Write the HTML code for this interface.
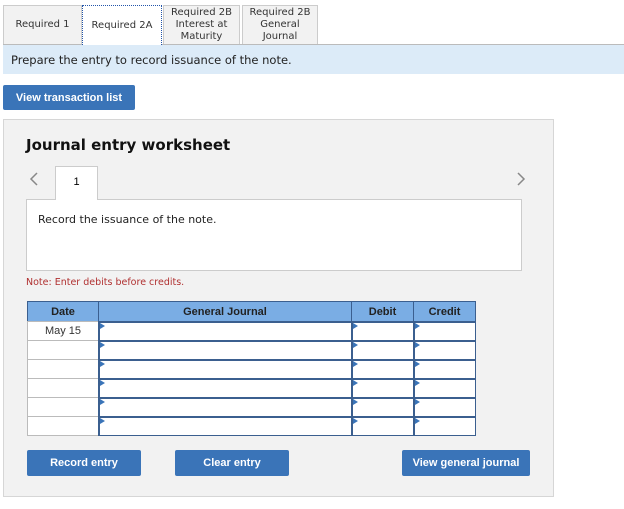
<!DOCTYPE html>
<html><head><style>
body{margin:0;width:624px;height:509px;background:#fff;font-family:Verdana,"DejaVu Sans",sans-serif;position:relative;overflow:hidden}
.a{position:absolute;box-sizing:border-box}
.tab{background:#f2f2f2;border:1px solid #ccc;border-bottom:none;font-size:10px;color:#333;text-align:center;display:flex;align-items:center;justify-content:center;line-height:12px}
.btn{background:#3a74b8;color:#fff;font-family:"Liberation Sans",Arial,sans-serif;font-weight:bold;font-size:11px;display:flex;align-items:center;justify-content:center;border-radius:2px}
.c{border:1px solid #3b5f8f;border-width:2px 1px 1px 2px;background:#fff}
.tri{position:absolute;left:0;top:0;width:0;height:0;border-top:3px solid transparent;border-bottom:3px solid transparent;border-left:5px solid #3a74b8}
.h{background:#7aade4;border:1px solid #3b5f8f;font-family:"Liberation Sans",Arial,sans-serif;font-weight:bold;font-size:11px;color:#222;display:flex;align-items:center;justify-content:center}
.d{background:#fff;border:1px solid #bbb;font-family:"Liberation Sans",Arial,sans-serif;font-size:11px;color:#333;display:flex;align-items:center;justify-content:center}
</style></head><body>
<div class="a tab" style="left:3px;top:5px;width:79px;height:39px">Required 1</div>
<div class="a tab" style="left:82px;top:5px;width:80px;height:40px;background:#fff;border:1px dotted #2255aa;border-bottom:none;z-index:2">Required 2A</div>
<div class="a tab" style="left:163px;top:5px;width:77px;height:39px">Required 2B<br>Interest at<br>Maturity</div>
<div class="a tab" style="left:242px;top:5px;width:76px;height:39px">Required 2B<br>General<br>Journal</div>
<div class="a" style="left:3px;top:44px;width:621px;height:30px;background:#dcebf8;border-top:1px solid #bbb;font-size:11.5px;color:#222;padding:8px 0 0 8px">Prepare the entry to record issuance of the note.</div>
<div class="a btn" style="left:3px;top:85px;width:132px;height:25px">View transaction list</div>
<div class="a" style="left:3px;top:119px;width:551px;height:378px;background:#f2f2f2;border:1px solid #d6d6d6"></div>
<div class="a" style="left:26px;top:136px;font-size:15px;font-weight:bold;color:#111">Journal entry worksheet</div>
<svg class="a" style="left:28px;top:171px" width="12" height="16"><path d="M9 2 L3 8 L9 14" fill="none" stroke="#888" stroke-width="1.5"/></svg>
<svg class="a" style="left:515px;top:171px" width="12" height="16"><path d="M3 2 L9 8 L3 14" fill="none" stroke="#888" stroke-width="1.5"/></svg>
<div class="a" style="left:26px;top:199px;width:496px;height:72px;background:#fff;border:1px solid #ccc;font-size:11px;color:#222;padding:13px 0 0 11px">Record the issuance of the note.</div>
<div class="a" style="left:55px;top:166px;width:43px;height:34px;background:#fff;border:1px solid #ccc;border-bottom:none;font-family:'Liberation Sans',Arial,sans-serif;font-size:11px;text-align:center;padding-top:9px">1</div>
<div class="a" style="left:26px;top:277px;font-size:9.5px;color:#b03030">Note: Enter debits before credits.</div>
<div class="a h" style="left:27px;top:301px;width:72px;height:21px">Date</div>
<div class="a h" style="left:98px;top:301px;width:254px;height:21px">General Journal</div>
<div class="a h" style="left:351px;top:301px;width:63px;height:21px">Debit</div>
<div class="a h" style="left:413px;top:301px;width:63px;height:21px">Credit</div>
<div class="a d" style="left:27px;top:321px;width:72px;height:20px">May 15</div>
<div class="a d" style="left:27px;top:340px;width:72px;height:20px"></div>
<div class="a d" style="left:27px;top:359px;width:72px;height:20px"></div>
<div class="a d" style="left:27px;top:378px;width:72px;height:20px"></div>
<div class="a d" style="left:27px;top:397px;width:72px;height:20px"></div>
<div class="a d" style="left:27px;top:416px;width:72px;height:20px"></div>
<div class="a c" style="left:98px;top:321px;width:254px;height:20px"><i class="tri"></i></div>
<div class="a c" style="left:351px;top:321px;width:63px;height:20px"><i class="tri"></i></div>
<div class="a c" style="left:413px;top:321px;width:63px;height:20px"><i class="tri"></i></div>
<div class="a c" style="left:98px;top:340px;width:254px;height:20px"><i class="tri"></i></div>
<div class="a c" style="left:351px;top:340px;width:63px;height:20px"><i class="tri"></i></div>
<div class="a c" style="left:413px;top:340px;width:63px;height:20px"><i class="tri"></i></div>
<div class="a c" style="left:98px;top:359px;width:254px;height:20px"><i class="tri"></i></div>
<div class="a c" style="left:351px;top:359px;width:63px;height:20px"><i class="tri"></i></div>
<div class="a c" style="left:413px;top:359px;width:63px;height:20px"><i class="tri"></i></div>
<div class="a c" style="left:98px;top:378px;width:254px;height:20px"><i class="tri"></i></div>
<div class="a c" style="left:351px;top:378px;width:63px;height:20px"><i class="tri"></i></div>
<div class="a c" style="left:413px;top:378px;width:63px;height:20px"><i class="tri"></i></div>
<div class="a c" style="left:98px;top:397px;width:254px;height:20px"><i class="tri"></i></div>
<div class="a c" style="left:351px;top:397px;width:63px;height:20px"><i class="tri"></i></div>
<div class="a c" style="left:413px;top:397px;width:63px;height:20px"><i class="tri"></i></div>
<div class="a c" style="left:98px;top:416px;width:254px;height:20px"><i class="tri"></i></div>
<div class="a c" style="left:351px;top:416px;width:63px;height:20px"><i class="tri"></i></div>
<div class="a c" style="left:413px;top:416px;width:63px;height:20px"><i class="tri"></i></div>
<div class="a btn" style="left:27px;top:450px;width:114px;height:26px">Record entry</div>
<div class="a btn" style="left:175px;top:450px;width:114px;height:26px">Clear entry</div>
<div class="a btn" style="left:402px;top:450px;width:128px;height:26px">View general journal</div>
</body></html>
